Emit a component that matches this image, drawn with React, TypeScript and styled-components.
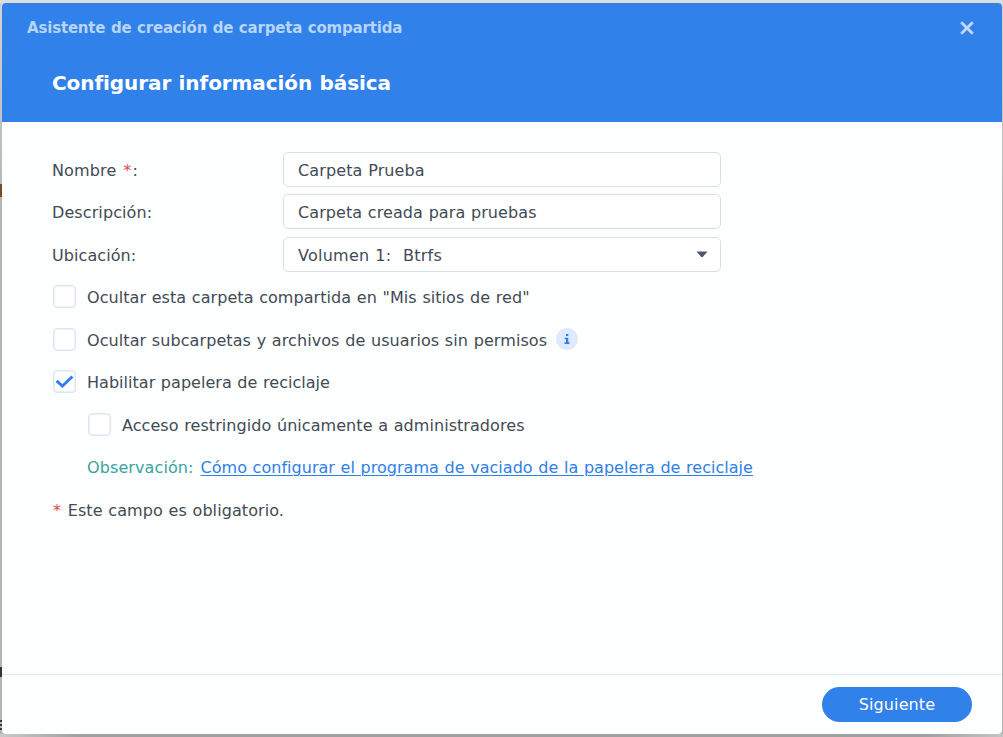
import React, { useState } from "react";
import styled, { createGlobalStyle } from "styled-components";

const GlobalStyle = createGlobalStyle`
  * { box-sizing: border-box; }
  body { margin: 0; overflow: hidden; font-family: "DejaVu Sans", sans-serif; color: #414b55; }
`;

const Desktop = styled.div`
  height: 737px;
  width: 1003px;
  padding: 3px 1px 3px 2px;
  background:
    linear-gradient(#7a4a2c, #7a4a2c) 0 184px / 2px 13px no-repeat,
    linear-gradient(#33363f, #33363f) 0 667px / 2px 10px no-repeat,
    repeating-linear-gradient(#333a42 0 2px, #b4b5b5 2px 4px) 0 720px / 2px 10px no-repeat,
    linear-gradient(#dfe0de, #dcdedb) 0 0 / 100% 3px no-repeat,
    linear-gradient(90deg, #c8c9c8, #a0a0a0 8%, #a0a0a0 92%, #c4c4c4) 0 734px / 100% 3px no-repeat,
    linear-gradient(#d2d4d2, #b2b3b3 30%);
`;

const Dialog = styled.section`
  height: 731px;
  display: flex;
  flex-direction: column;
  background: #fdfefe;
  border-radius: 4px;
  overflow: hidden;
`;

const Header = styled.header`
  height: 119px;
  padding: 13px 25px 0;
  background: #3081ea;
  color: #fff;
`;

const TitleBar = styled.div`
  display: flex;
  justify-content: space-between;
  align-items: center;
  height: 24px;
`;

const Text = styled.span<{ $spacing?: number }>`
  letter-spacing: ${(p) => p.$spacing ?? 0.06}px;
  word-spacing: 0.5px;
  white-space: pre;
`;

const WindowTitle = styled(Text)`
  font-size: 15px;
  font-weight: 700;
  color: #b8d5f9;
`;

const CloseButton = styled.button`
  width: 20px;
  height: 20px;
  padding: 0;
  border: 0;
  background: none;
  display: grid;
  place-items: center;
  color: #c1daf9;
`;

const Heading = styled.h1`
  margin: 29px 0 0 25px;
  font-size: 20px;
  line-height: 28px;
  font-weight: 700;
`;

const Body = styled.main`
  flex: 1;
  padding: 30px 50px 0;
  font-size: 16px;

  ${Text} {
    padding-top: 1px;
  }
`;

const Row = styled.div<{ $indent?: number }>`
  display: flex;
  align-items: center;
  height: 35px;
  margin-bottom: 7px;
  padding-left: ${(p) => p.$indent ?? 0}px;
  line-height: 35px;
  &:nth-child(even) { margin-bottom: 8px; }
`;

const Label = styled.label`
  display: flex;
  width: 231px;
`;

const Field = styled.div`
  display: flex;
  align-items: center;
  justify-content: space-between;
  width: 438px;
  height: 35px;
  padding: 0 12px 0 14px;
  border: 1px solid #d4dfec;
  border-radius: 5px;
  background: #fff;
`;

const Required = styled.span`
  padding: 0 1px;
  color: #dc4a5a;
`;

const Box = styled.button`
  flex: none;
  width: 23px;
  height: 23px;
  margin: 0 11px 0 1px;
  padding: 0;
  display: grid;
  place-items: center;
  border: 1px solid #dde5f1;
  border-radius: 4px;
  box-shadow: inset 0 0 0 1px #edf1f8;
  background: #fff;
`;

const InfoBadge = styled.span`
  width: 22px;
  height: 22px;
  margin: 0 0 2px 9px;
  border-radius: 50%;
  background: #deeafd;
  display: grid;
  place-items: center;
`;

const Note = styled(Text)`
  color: #3aa3a0;
`;

const Link = styled.a`
  margin-left: 7px;
  padding-top: 1px;
  color: #2f80e8;
  letter-spacing: 0.03px;
  word-spacing: 0.5px;
  text-decoration: underline;
  text-decoration-thickness: 1px;
  text-underline-offset: 2px;
  white-space: nowrap;
`;

const Footer = styled.footer`
  height: 60px;
  padding: 12px 30px 0;
  border-top: 1px solid #dde7f1;
  display: flex;
  justify-content: flex-end;
`;

const NextButton = styled.button`
  width: 150px;
  height: 35px;
  padding: 0;
  border: 0;
  border-radius: 18px;
  background: #3081ea;
  color: #fff;
  font: 16px "DejaVu Sans", sans-serif;
`;

function Checkbox({ initial = false }: { initial?: boolean }) {
  const [checked, setChecked] = useState(initial);
  return (
    <Box role="checkbox" aria-checked={checked} onClick={() => setChecked(!checked)}>
      {checked && (
        <svg width="19" height="15" viewBox="0 0 19 15" fill="none">
          <path d="M1.600 6.800 7.400 12 17.400 2.500" stroke="#2f80ed" strokeWidth="3" />
        </svg>
      )}
    </Box>
  );
}

export default function App() {
  return (
    <>
      <GlobalStyle />
      <Desktop>
        <Dialog>
          <Header>
            <TitleBar>
              <WindowTitle $spacing={-0.18}>Asistente de creación de carpeta compartida</WindowTitle>
              <CloseButton aria-label="Cerrar">
                <svg width="14" height="14" viewBox="0 0 14 14" fill="none">
                  <path d="M1.200 1.200 12.800 12.800M12.800 1.200 1.200 12.800" stroke="currentColor" strokeWidth="2.800" />
                </svg>
              </CloseButton>
            </TitleBar>
            <Heading>
              <Text $spacing={-0.08}>Configurar información básica</Text>
            </Heading>
          </Header>
          <Body>
            <Row>
              <Label><Text $spacing={0.15}>Nombre <Required>*</Required>:</Text></Label>
              <Field><Text $spacing={0.12}>Carpeta Prueba</Text></Field>
            </Row>
            <Row>
              <Label><Text $spacing={0.1}>Descripción:</Text></Label>
              <Field><Text $spacing={0.08}>Carpeta creada para pruebas</Text></Field>
            </Row>
            <Row>
              <Label><Text $spacing={0.08}>Ubicación:</Text></Label>
              <Field>
                <Text $spacing={0.25}>Volumen 1:  Btrfs</Text>
                <svg width="12" height="7" viewBox="0 0 12 7">
                  <path d="M0.500 0.500h11L7 5.800q-1 .8-2 0z" fill="#505a66" />
                </svg>
              </Field>
            </Row>
            <Row>
              <Checkbox />
              <Text>Ocultar esta carpeta compartida en "Mis sitios de red"</Text>
            </Row>
            <Row>
              <Checkbox />
              <Text $spacing={0.08}>Ocultar subcarpetas y archivos de usuarios sin permisos</Text>
              <InfoBadge>
                <svg width="6" height="10" viewBox="0 0 6 10" fill="#2f80ed">
                  <path d="M2 0h2.300v2H2zM.7 3.700h3.600v4.600h1.200V10H.5V8.300h1.500V5.300H.7z" />
                </svg>
              </InfoBadge>
            </Row>
            <Row>
              <Checkbox initial />
              <Text $spacing={0.03}>Habilitar papelera de reciclaje</Text>
            </Row>
            <Row $indent={35}>
              <Checkbox />
              <Text>Acceso restringido únicamente a administradores</Text>
            </Row>
            <Row $indent={35}>
              <Note $spacing={0.1}>Observación:</Note>
              <Link>Cómo configurar el programa de vaciado de la papelera de reciclaje</Link>
            </Row>
            <Row>
              <Text $spacing={0.08}><Required>*</Required> Este campo es obligatorio.</Text>
            </Row>
          </Body>
          <Footer>
            <NextButton><Text $spacing={0.1}>Siguiente</Text></NextButton>
          </Footer>
        </Dialog>
      </Desktop>
    </>
  );
}
